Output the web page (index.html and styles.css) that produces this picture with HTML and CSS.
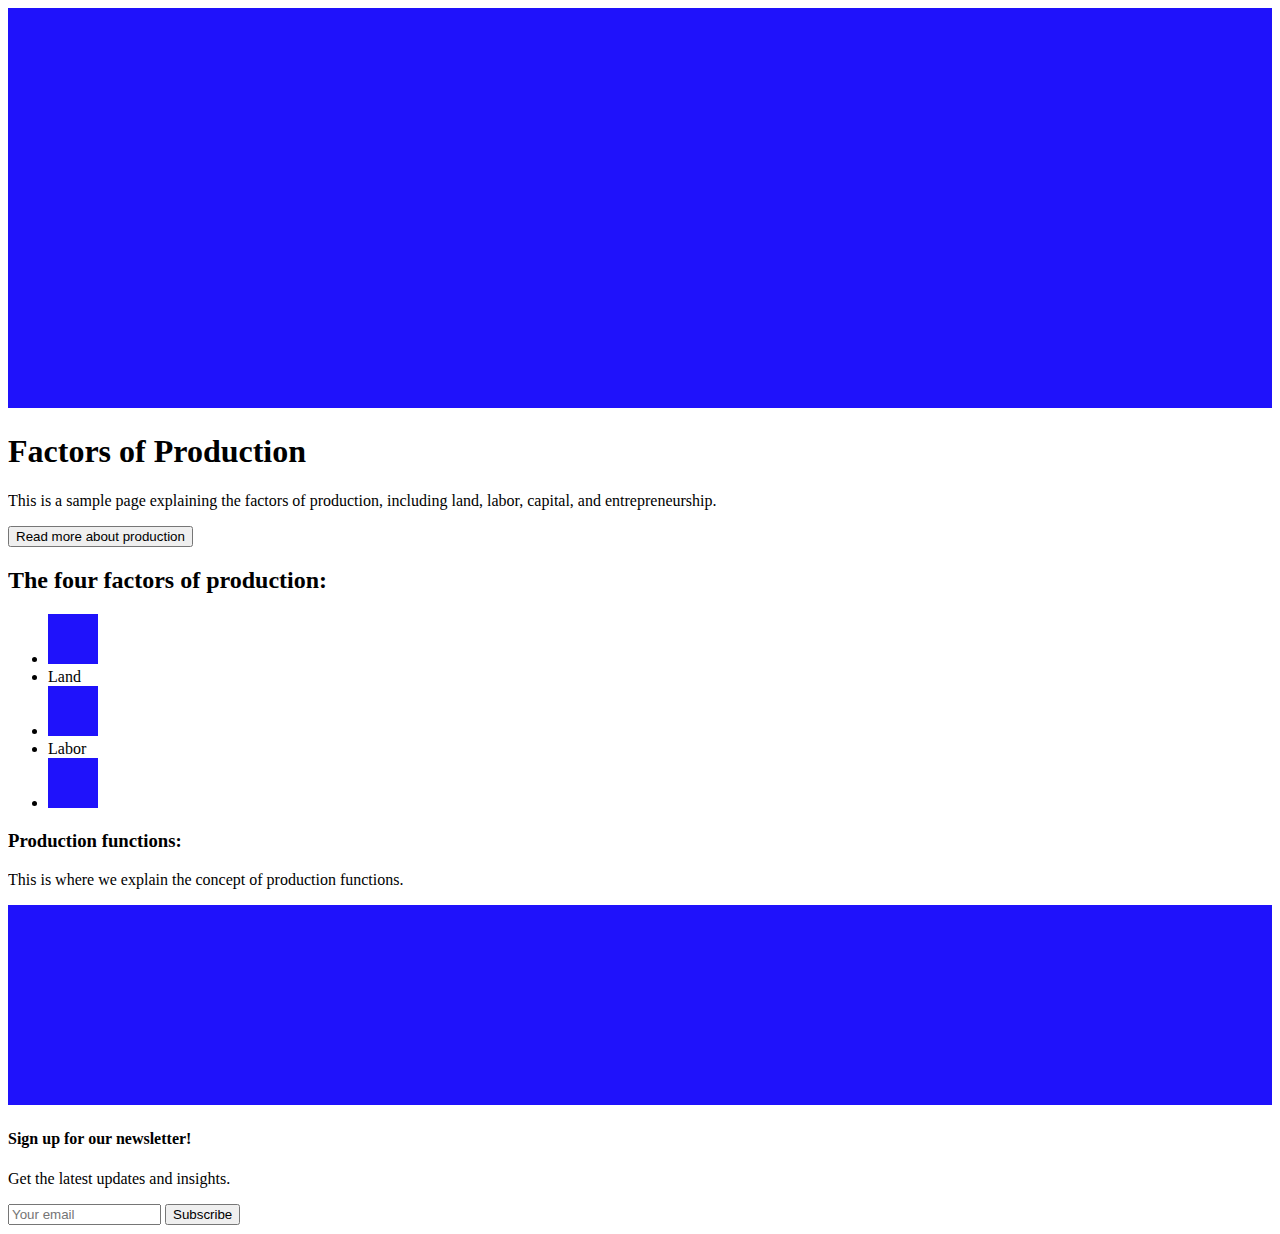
FILE: index.html
```html
<!DOCTYPE html>
<html>
<head>
<meta charset="utf-8">
<link rel="stylesheet" href="styles.css">
</head>
<body>
<div class="figure"><span class="hero"></span></div>
<h1>Factors of Production</h1>
<p>This is a sample page explaining the factors of production, including land, labor, capital, and entrepreneurship.</p>
<button class="btn">Read more about production</button>
<h2>The four factors of production:</h2>
<ul>
<li><span class="thumb"></span></li>
<li>Land</li>
<li><span class="thumb"></span></li>
<li>Labor</li>
<li><span class="thumb"></span></li>
</ul>
<h3>Production functions:</h3>
<p>This is where we explain the concept of production functions.</p>
<div class="figure"><span class="banner"></span></div>
<footer>
<h4>Sign up for our newsletter!</h4>
<p>Get the latest updates and insights.</p>
<form><input class="email" type="email" placeholder="Your email"> <button type="button" class="btn">Subscribe</button></form>
</footer>
</body>
</html>
```
FILE: styles.css
```css
body {
  margin: 8px;
  font-family: "Liberation Serif", "Times New Roman", serif;
  font-size: 16px;
  color: #000;
  background: #fff;
}
.hero {
  display: inline-block;
  width: 100%;
  height: 400px;
  background: #1f12fb;
}
.banner {
  display: inline-block;
  width: 100%;
  height: 200px;
  background: #1f12fb;
}
.thumb {
  display: inline-block;
  width: 50px;
  height: 50px;
  background: #1f12fb;
}
.btn, .email {
  font-family: "Liberation Sans", Arial, sans-serif;
  font-size: 13.33px;
}
.email {
  box-sizing: border-box;
  width: 153px;
}
```
